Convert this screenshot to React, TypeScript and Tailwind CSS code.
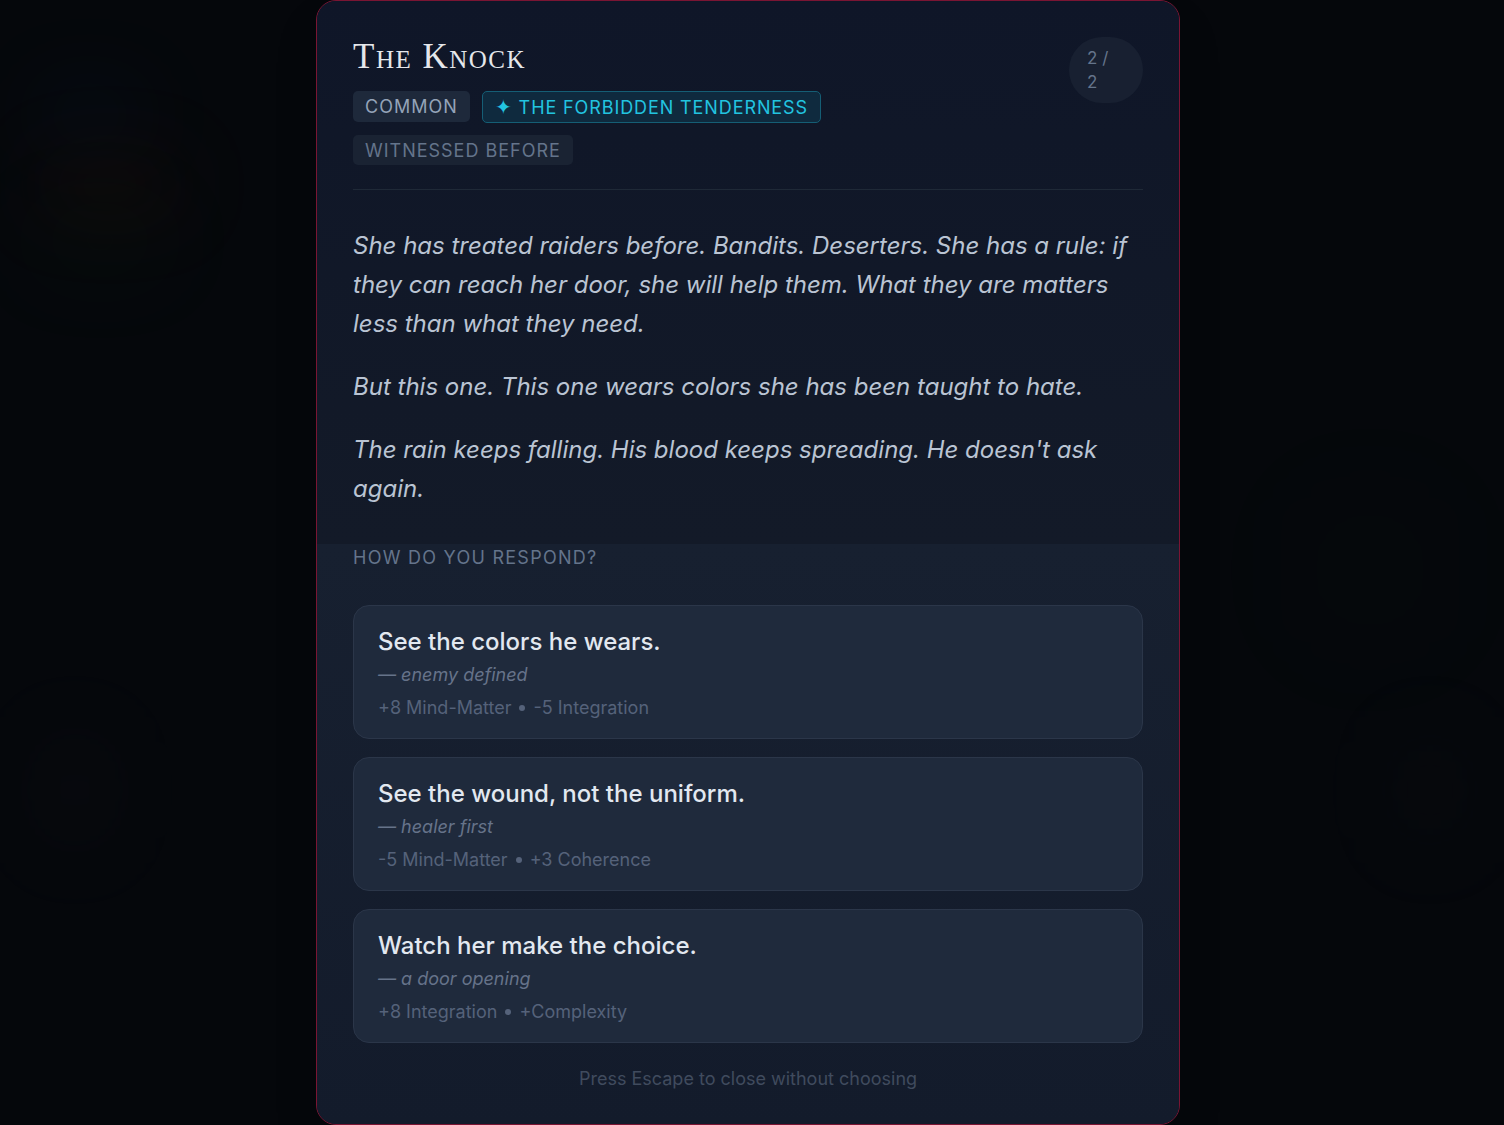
import React from "react";

const options = [
  {
    title: "See the colors he wears.",
    sub: "— enemy defined",
    stats: ["+8 Mind-Matter", "-5 Integration"],
  },
  {
    title: "See the wound, not the uniform.",
    sub: "— healer first",
    stats: ["-5 Mind-Matter", "+3 Coherence"],
  },
  {
    title: "Watch her make the choice.",
    sub: "— a door opening",
    stats: ["+8 Integration", "+Complexity"],
  },
];

export default function App() {
  return (
    <div
      className="relative min-h-screen w-full overflow-hidden bg-[#05070b]"
      style={{ fontFamily: "Inter, 'Noto Sans', sans-serif" }}
    >
      {/* blurred background remnants */}
      <div className="pointer-events-none absolute left-[40px] top-[95px] h-[40px] w-[100px] rounded-full bg-[#0c2a4a] opacity-25 blur-2xl" />
      <div className="pointer-events-none absolute left-[40px] top-[165px] h-[40px] w-[140px] rounded-full bg-[#3a1a0a] opacity-30 blur-2xl" />
      <div className="pointer-events-none absolute left-[40px] top-[220px] h-[40px] w-[120px] rounded-full bg-[#0c2a12] opacity-25 blur-2xl" />
      <div className="pointer-events-none absolute left-[55px] top-[740px] h-[100px] w-[40px] rounded-full bg-[#1a1c22] opacity-30 blur-2xl" />
      <div className="pointer-events-none absolute left-[1340px] top-[530px] h-[80px] w-[60px] rounded-full bg-[#0a2a14] opacity-25 blur-3xl" />
      <div className="pointer-events-none absolute left-[1410px] top-[740px] h-[100px] w-[40px] rounded-full bg-[#14161c] opacity-30 blur-2xl" />

      <div className="relative flex w-full justify-center pr-[8px]">
        <div className="w-[864px] overflow-hidden rounded-[20px] border border-[#7a1533] bg-[#111828] shadow-2xl">
          {/* upper section */}
          <div className="bg-gradient-to-b from-[#0f1628] to-[#131a28] px-[36px] pt-[36px]">
            <div className="border-b border-[#1f2937] pb-6">
              <div className="flex items-start justify-between">
                <div>
                  <h1
                    className="h-[40px] text-[35px] leading-[40px] tracking-[1.5px] text-[#e5e7eb]"
                    style={{ fontFamily: "'Liberation Serif', 'DejaVu Serif', serif", fontVariant: "small-caps" }}
                  >
                    The Knock
                  </h1>
                  <div className="mt-[14px] flex max-w-[600px] flex-wrap gap-x-3 gap-y-3">
                    <span className="flex h-[31px] items-center rounded-[5px] bg-[#1e293b] px-3 text-[18px] uppercase tracking-[0.055em] text-[#94a3b8]">
                      Common
                    </span>
                    <span className="flex h-[32px] items-center gap-[6px] rounded-[5px] border border-[#155e75] bg-[#0f2a3e] px-3 text-[18px] uppercase tracking-[0.05em] text-[#22c4e0]">
                      <span className="text-[20px] leading-none">✦</span>
                      The Forbidden Tenderness
                    </span>
                    <span className="flex h-[30px] items-center rounded-[5px] bg-[#1a2333] px-3 text-[18px] uppercase tracking-[0.055em] text-[#64748b]">
                      Witnessed Before
                    </span>
                  </div>
                </div>
                <div className="flex h-[66px] w-[74px] flex-col justify-center rounded-full bg-[#182031] pl-[18px] text-[17px] leading-[24px] text-[#64748b]">
                  <span>2 /</span>
                  <span>2</span>
                </div>
              </div>
            </div>

            <div className="space-y-6 py-9 text-[24px] italic leading-[39px] text-[#bac4d3]">
              <p>
                She has treated raiders before. Bandits. Deserters. She has a rule: if they can reach her door, she will help them. What they are matters less than what they need.
              </p>
              <p>But this one. This one wears colors she has been taught to hate.</p>
              <p>The rain keeps falling. His blood keeps spreading. He doesn't ask again.</p>
            </div>
          </div>

          {/* lower section */}
          <div className="bg-gradient-to-b from-[#172030] to-[#131b2b] px-[36px] pb-[32px]">
            <div className="text-[18px] uppercase leading-[27px] tracking-[0.07em] text-[#64748b]">
              How do you respond?
            </div>
            <div className="mt-[34px] flex flex-col gap-[18px]">
              {options.map((o) => (
                <div
                  key={o.title}
                  className="h-[134px] rounded-2xl border border-[#2b3649] bg-[#1f2a3c] px-6 pt-5"
                >
                  <div className="text-[24px] font-medium leading-[32px] text-[#e2e8f0]">{o.title}</div>
                  <div className="mt-[3px] text-[18px] italic leading-[27px] text-[#66738a]">{o.sub}</div>
                  <div className="mt-[6px] flex items-center gap-2 text-[18px] leading-[27px] text-[#55627a]">
                    <span>{o.stats[0]}</span>
                    <span className="h-[6px] w-[6px] rounded-full bg-[#55627a]" />
                    <span>{o.stats[1]}</span>
                  </div>
                </div>
              ))}
            </div>
            <div className="mt-[22px] text-center text-[18px] leading-[27px] text-[#404b5e]">
              Press Escape to close without choosing
            </div>
          </div>
        </div>
      </div>
    </div>
  );
}
